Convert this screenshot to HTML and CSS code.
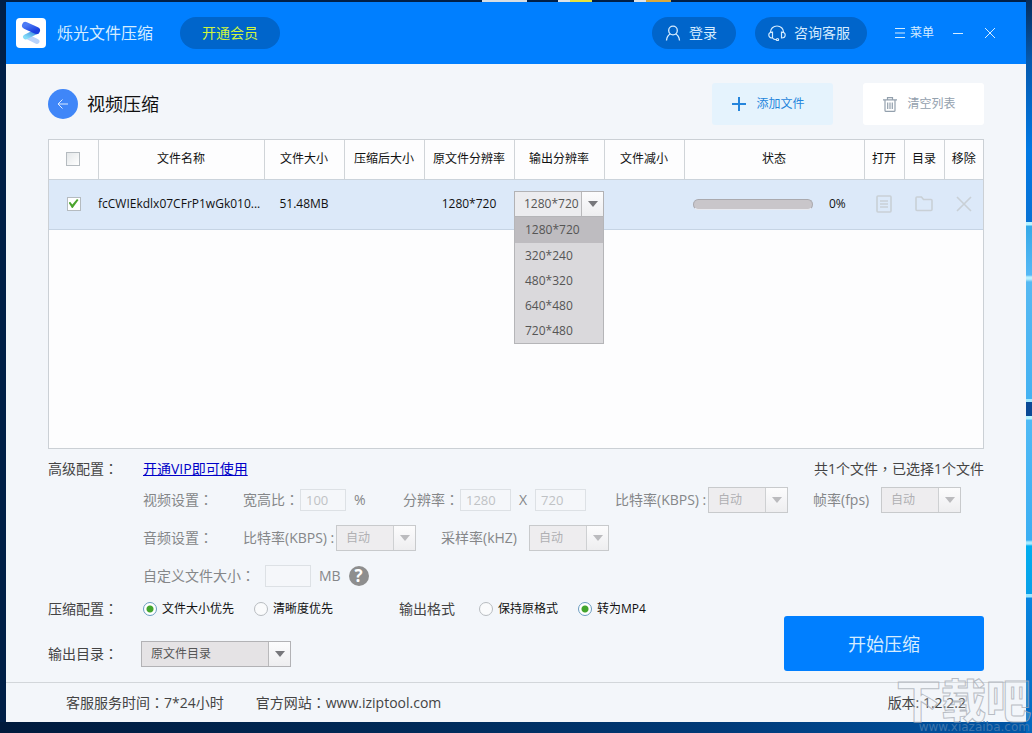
FILE: index.html
```
<!DOCTYPE html>
<html lang="zh-CN">
<head>
<meta charset="utf-8">
<title>烁光文件压缩</title>
<link rel="stylesheet" href="styles.css">
</head>
<body>
<div class="window">
  <header class="titlebar">
    <svg class="logo" viewBox="0 0 30 30" aria-hidden="true">
      <defs>
        <linearGradient id="lg1" x1="0" y1="0" x2="1" y2="1"><stop offset="0" stop-color="#4d7bf5"/><stop offset="1" stop-color="#1b40e0"/></linearGradient>
        <linearGradient id="lg2" x1="1" y1="0" x2="0" y2="1"><stop offset="0" stop-color="#3a86dc"/><stop offset="1" stop-color="#83dcf8"/></linearGradient>
      </defs>
      <rect width="30" height="30" rx="4" fill="#fff"/>
      <path d="M11 18.500L21 23.500" stroke="#b9d3fb" stroke-width="5" stroke-linecap="round"/>
      <path d="M20.500 13.500L9.500 19" stroke="url(#lg2)" stroke-width="5" stroke-linecap="round"/>
      <path d="M9.500 7.500L20.500 12.500" stroke="url(#lg1)" stroke-width="7" stroke-linecap="round"/>
    </svg>
    <h1 class="app-name">烁光文件压缩</h1>
    <button class="pill pill-vip" type="button">开通会员</button>
    <div class="title-actions">
      <button class="pill pill-login" type="button">
        <svg width="16" height="16" viewBox="0 0 16 16" fill="none" stroke="currentColor" stroke-width="1.300" aria-hidden="true"><circle cx="8" cy="5.500" r="4.300"/><path d="M1.500 15.500C1.800 12 3.500 9.800 5.500 9M14.500 15.500C14.200 12 12.500 9.800 10.500 9"/></svg>
        登录
      </button>
      <button class="pill pill-support" type="button">
        <svg width="18" height="16" viewBox="0 0 18 16" fill="none" stroke="currentColor" stroke-width="1.200" aria-hidden="true"><path d="M2.500 7.500V7C2.500 3.500 5.300 1 9 1S15.500 3.500 15.500 7V7.500"/><path d="M4.500 7.200V13C2.300 13 .8 12 .8 10.100S2.300 7.200 4.500 7.200ZM13.500 7.200V13C15.700 13 17.200 12 17.200 10.100S15.700 7.200 13.500 7.200ZM4.500 13C5.500 14.300 6.500 14.700 8 14.700"/><circle cx="9.500" cy="14.600" r="1.100"/></svg>
        咨询客服
      </button>
      <button class="plain menu" type="button">
        <svg width="10" height="10" viewBox="0 0 10 10" stroke="currentColor" aria-hidden="true"><path d="M0 .5H10M0 5H10M0 9.500H10"/></svg>
        菜单
      </button>
      <button class="plain" type="button" aria-label="最小化"><svg width="12" height="12" viewBox="0 0 12 12" stroke="currentColor"><path d="M1 6.500H11"/></svg></button>
      <button class="plain close" type="button" aria-label="关闭"><svg width="12" height="12" viewBox="0 0 12 12" stroke="currentColor"><path d="M1 1L11 11M11 1L1 11"/></svg></button>
    </div>
  </header>

  <main class="content">
    <div class="page-head">
      <button class="back" type="button" aria-label="返回"><svg width="12" height="12" viewBox="0 0 12 12" fill="none" stroke="currentColor"><path d="M11 6H1.500M5.500 1.500L1 6L5.500 10.500"/></svg></button>
      <h2 class="page-title">视频压缩</h2>
      <button class="tool add" type="button">
        <svg width="14" height="14" viewBox="0 0 14 14" stroke="currentColor" stroke-width="2" aria-hidden="true"><path d="M0 7H14M7 0V14"/></svg>
        添加文件
      </button>
      <button class="tool clear" type="button">
        <svg width="14" height="15" viewBox="0 0 14 15" fill="none" stroke="currentColor" stroke-width="1.200" aria-hidden="true"><path d="M0 2.800H14M4.500 2.500V.7H9.500V2.500M2 3V13.500Q2 14.400 3 14.400H11Q12 14.400 12 13.500V3M4.700 5.500V12M7 5.500V12M9.300 5.500V12"/></svg>
        清空列表
      </button>
    </div>

    <div class="file-panel">
      <table class="files">
        <colgroup>
          <col class="c-check"><col><col class="c-size"><col class="c-size"><col class="c-res"><col class="c-res"><col class="c-size"><col class="c-state"><col class="c-op"><col class="c-op"><col class="c-last">
        </colgroup>
        <thead>
          <tr>
            <th><input class="check" type="checkbox" aria-label="全选"></th>
            <th>文件名称</th><th>文件大小</th><th>压缩后大小</th><th>原文件分辨率</th><th>输出分辨率</th><th>文件减小</th><th>状态</th><th>打开</th><th>目录</th><th>移除</th>
          </tr>
        </thead>
        <tbody>
          <tr>
            <td><input class="check" type="checkbox" checked aria-label="选择文件"></td>
            <td class="name">fcCWIEkdlx07CFrP1wGk010...</td>
            <td>51.48MB</td>
            <td></td>
            <td>1280*720</td>
            <td>
              <div class="picker">
                <span class="combo combo-res"><select aria-label="输出分辨率"><option>1280*720</option><option>320*240</option><option>480*320</option><option>640*480</option><option>720*480</option></select></span>
                <ul class="options">
                  <li class="active">1280*720</li><li>320*240</li><li>480*320</li><li>640*480</li><li>720*480</li>
                </ul>
              </div>
            </td>
            <td></td>
            <td><div class="state"><div class="bar" role="progressbar" aria-label="进度" aria-valuenow="0"></div><span>0%</span></div></td>
            <td><button class="op" type="button" aria-label="打开"><svg width="16" height="18" viewBox="0 0 16 18" fill="none" stroke="currentColor" stroke-width="1.600"><rect x="1" y="1" width="14" height="16" rx="1"/><path d="M4 6H12M4 9H12M4 12H12"/></svg></button></td>
            <td><button class="op" type="button" aria-label="目录"><svg width="18" height="16" viewBox="0 0 18 16" fill="none" stroke="currentColor" stroke-width="1.600"><path d="M1 13.500V2Q1 1 2 1H6.500L8.500 3.500H16Q17 3.500 17 4.500V13.500Q17 14.500 16 14.500H2Q1 14.500 1 13.500Z"/></svg></button></td>
            <td><button class="op" type="button" aria-label="移除"><svg width="16" height="16" viewBox="0 0 16 16" fill="none" stroke="currentColor" stroke-width="1.600"><path d="M1 1L15 15M15 1L1 15"/></svg></button></td>
          </tr>
        </tbody>
      </table>
    </div>

    <div class="row row-first">
      <span class="label">高级配置<span class="mark" lang="zh-TW">：</span></span>
      <a class="vip-link" href="#">开通VIP即可使用</a>
      <span class="summary">共1个文件<span class="mark" lang="zh-TW">，</span>已选择1个文件</span>
    </div>
    <div class="row row-sub muted">
      <span class="sublabel">视频设置<span class="mark" lang="zh-TW">：</span></span>
      <div class="field f-ratio"><label class="l-short" for="ratio">宽高比<span class="mark" lang="zh-TW">：</span></label><input class="box" id="ratio" value="100" disabled><span class="unit">%</span></div>
      <div class="field f-size"><label class="l-short" for="rw">分辨率<span class="mark" lang="zh-TW">：</span></label><input class="box wide" id="rw" value="1280" disabled><span class="unit">X</span><input class="box wide" value="720" aria-label="高度" disabled></div>
      <div class="field f-rate"><label class="l-rate" for="vb">比特率(KBPS) :</label><span class="combo off"><select id="vb" disabled><option>自动</option></select></span></div>
      <div class="field"><label class="l-fps" for="fps">帧率(fps)</label><span class="combo off"><select id="fps" disabled><option>自动</option></select></span></div>
    </div>
    <div class="row row-sub muted gap-m">
      <span class="sublabel">音频设置<span class="mark" lang="zh-TW">：</span></span>
      <div class="field f-rate"><label class="l-rate" for="ab">比特率(KBPS) :</label><span class="combo off"><select id="ab" disabled><option>自动</option></select></span></div>
      <div class="field"><label class="l-sample" for="hz">采样率(kHZ)</label><span class="combo off"><select id="hz" disabled><option>自动</option></select></span></div>
    </div>
    <div class="row row-sub muted gap-m">
      <label class="l-custom" for="mb">自定义文件大小<span class="mark" lang="zh-TW">：</span></label>
      <input class="box" id="mb" disabled><span class="unit">MB</span>
      <button class="help" type="button" aria-label="帮助">?</button>
    </div>

    <div class="bottom">
      <div class="bottom-left">
        <div class="row">
          <span class="label">压缩配置<span class="mark" lang="zh-TW">：</span></span>
          <label class="choice"><input type="radio" name="mode" checked>文件大小优先</label>
          <label class="choice choice-last"><input type="radio" name="mode">清晰度优先</label>
          <span class="format">输出格式</span>
          <label class="choice"><input type="radio" name="format">保持原格式</label>
          <label class="choice"><input type="radio" name="format" checked>转为MP4</label>
        </div>
        <div class="row gap-l">
          <label class="label label-dir" for="dir">输出目录<span class="mark" lang="zh-TW">：</span></label>
          <span class="combo combo-dir"><select id="dir"><option>原文件目录</option></select></span>
        </div>
      </div>
      <button class="start" type="button">开始压缩</button>
    </div>
  </main>

  <footer class="statusbar">
    <span>客服服务时间<span class="mark" lang="zh-TW">：</span>7*24小时</span>
    <span>官方网站<span class="mark" lang="zh-TW">：</span>www.iziptool.com</span>
    <span class="version">版本: 1.2.2.2</span>
  </footer>
</div>
<div class="watermark" aria-hidden="true"><span class="wm-name">下载吧</span><span class="wm-url">www.xiazaiba.com</span></div>
</body>
</html>
```
FILE: styles.css
```
* { box-sizing: border-box; }

body {
  margin: 0;
  min-height: 100vh;
  display: flex;
  padding: 2px 6px 11px;
  position: relative;
  overflow: hidden;
  font: 14px/20px "Open Sans", "Noto Sans CJK SC", sans-serif;
  color: #444;
  background:
    linear-gradient(90deg, transparent 482px, #d8dde2 482px 527px, transparent 527px 558px, #dfe3e6 558px 570px, #e6e23c 570px 592px, transparent 592px 634px, #dfe3e6 634px 646px, #d9a83c 646px 671px, transparent 671px) top / 100% 2px no-repeat,
    linear-gradient(180deg, #062d5c 0, #0559ae 60px, #0079e4 150px, #0872d4 222px, #b8f4ff 222px 225px, #35aae8 226px, #55b8f5 275px, #b8f0ff 277px 279px, #55b9f2 282px, #44b2f2 399px, #a5eaff 399px 402px, #0a4a96 402px 416px, #b8f4ff 416px 419px, #4fbaf5 420px, #3aaef2 540px, #a5eaff 542px 544px, #00aeef 546px, #08a0e8 594px, #9be8ff 594px 597px, #0785e0 598px, #0067bd 100%) right / 6px 100% no-repeat,
    linear-gradient(90deg, #001a3c, #002a58 40%, #003a78 70%, #0057a8) bottom / 100% 11px no-repeat,
    #001f47;
}

h1, h2, ul { margin: 0; padding: 0; font-weight: 400; }
button, input, select { font: inherit; color: inherit; margin: 0; }
button { border: 0; padding: 0; background: none; display: flex; align-items: center; justify-content: center; }

/* Full-width punctuation centred in its cell */
.mark { font-family: "Noto Sans CJK TC", sans-serif; line-height: 1; }

.window {
  flex: 1;
  display: flex;
  flex-direction: column;
  background: #f3f6fa;
}

.titlebar {
  height: 62px;
  padding: 0 30px 0 10px;
  display: flex;
  align-items: center;
  background: #007fff;
  color: #d5ecff;
}
.logo { width: 30px; height: 30px; margin-right: 11px; }
.app-name { font-size: 16px; line-height: 24px; margin-right: 27px; }
.pill { height: 32px; border-radius: 16px; background: #0065cb; gap: 8px; }
.pill-vip { width: 100px; color: #d0f53c; }
.pill-login { width: 84px; margin-right: 19px; padding-right: 6px; }
.pill-support { width: 112px; margin-right: 28px; padding-right: 4px; }
.title-actions { display: flex; align-items: center; margin-left: auto; }
.plain { height: 24px; }
.menu { gap: 5px; margin-right: 18px; font-size: 12px; }
.close { margin-left: 20px; }

.content { flex: 1; padding: 0 42px; }

.page-head { display: flex; align-items: center; height: 75px; padding-top: 5px; }
.back { width: 30px; height: 30px; border-radius: 50%; background: #3f86f8; color: #dcebff; }
.page-title { margin-left: 9px; font-size: 18px; line-height: 24px; color: #111; }
.tool { width: 121px; height: 42px; padding-right: 8px; border-radius: 3px; font-size: 12px; gap: 10px; }
.add { margin-left: auto; margin-right: 30px; background: #e5f3fd; color: #2585dc; }
.clear { background: #fff; color: #93a0ad; }

.file-panel { height: 310px; border: 1px solid #cbd0d5; background: #fdfdfe; }
.files { width: 100%; table-layout: fixed; border-collapse: collapse; font-size: 12px; color: #111; }
.c-check { width: 49px; }
.c-size { width: 80px; }
.c-res { width: 90px; }
.c-state { width: 180px; }
.c-op { width: 40px; }
.c-last { width: 39px; }
.files th, .files td { padding: 0; text-align: center; font-weight: 400; white-space: nowrap; }
.files th { height: 39px; border-right: 1px solid #d0d4d8; border-bottom: 1px solid #cbd3db; }
.files th:last-child { border-right: 0; }
.files td { height: 50px; background: #dce9f9; border-bottom: 1px solid #c6d4e4; }
.files .name { text-align: left; }

.check {
  appearance: none;
  display: block;
  width: 14px;
  height: 14px;
  margin: 0 auto;
  border: 1px solid #b5bbc0;
  background: linear-gradient(135deg, #e4e7e9, #fff);
}
.check:checked { background: #fff; }
.check:checked::after {
  content: "";
  display: block;
  width: 10px;
  height: 9px;
  margin: 1px;
  background: #4ba52e;
  clip-path: polygon(0 40%, 18% 32%, 38% 60%, 85% 0, 100% 12%, 42% 100%, 34% 100%);
}

.combo { position: relative; display: inline-flex; width: 80px; height: 26px; border: 1px solid #b2b2b5; background: #e5e3e5; }
.combo select { appearance: none; width: 100%; border: 0; padding: 0 22px 0 9px; background: none; font-size: 12px; color: #555; opacity: 1; border-radius: 0; }
.combo::before { content: ""; position: absolute; top: 0; right: 0; bottom: 0; width: 21px; border-left: 1px solid #b9b9bb; background: linear-gradient(#fcfcfd, #eeeef0); }
.combo::after { content: ""; position: absolute; top: 9px; right: 5px; border: 5px solid transparent; border-top: 6px solid #77777b; border-bottom: 0; }
.combo.off { border-color: #c8cacc; background: #eeedef; }
.combo.off select { color: #b0b0b3; }
.combo.off::before { border-color: #ced0d2; }
.combo.off::after { border-top-color: #bbbbbe; }
.combo-res { width: 90px; background: #ececef; }
.combo-res select { padding-right: 20px; }
.combo-dir { width: 150px; }

.picker { position: relative; width: 90px; height: 26px; }
.options {
  position: absolute;
  z-index: 2;
  top: 25px;
  left: 0;
  width: 100%;
  list-style: none;
  text-align: left;
  border: 1px solid #b5b5b8;
  background: #dad9dc;
  color: #555;
}
.options li { height: 25px; padding-left: 10px; line-height: 26px; }
.options .active { height: 26px; background: #bebcc0; }

.state { display: flex; align-items: center; padding-left: 9px; gap: 16px; }
.bar { width: 120px; height: 11px; border-radius: 6px; background: #c9c6ca; border: 1px solid #aaa9ae; border-bottom-color: #e8eaf0; }
.op { width: 100%; color: #c9d0d6; }

.row { display: flex; align-items: center; height: 26px; white-space: nowrap; }
.row-first { margin: 7px 0 5px; }
.row-sub { padding-left: 95px; }
.gap-m { margin-top: 12px; }
.gap-l { margin-top: 19px; }
.label { width: 95px; flex: none; }
.label-dir { width: 93px; }
.vip-link { color: #0000c8; }
.summary { margin-left: auto; }
.muted { color: #858789; }
.sublabel { width: 100px; flex: none; }
.field { display: flex; align-items: center; flex: none; }
.f-ratio { width: 160px; }
.f-size { width: 212px; }
.f-rate { width: 198px; }
.l-short { width: 57px; }
.l-rate { width: 93px; }
.l-fps { width: 68px; }
.l-sample { width: 88px; }
.l-custom { width: 122px; }
.box { width: 46px; height: 22px; padding: 0 5px; border: 1px solid #dde1e5; background: #f5f7fa; color: #bfc2c5; font-size: 13px; }
.box.wide { width: 51px; }
.unit { margin: 0 8px; }
.help { width: 20px; height: 20px; border-radius: 50%; background: #8e8e8e; color: #fff; font-weight: 700; font-size: 17px; line-height: 20px; }

.bottom { display: flex; justify-content: space-between; align-items: flex-end; margin-top: 7px; padding-bottom: 11px; }
.bottom-left { padding-bottom: 4px; }
.choice { display: flex; align-items: center; gap: 5px; margin-right: 20px; font-size: 12px; color: #111; }
.choice-last { margin-right: 66px; }
.choice input { appearance: none; width: 14px; height: 14px; border: 1px solid #b8bcc0; border-radius: 50%; background: #fafbfc; }
.choice input:checked { border-color: #6a9cc0; background: radial-gradient(circle, #43a52c 0 3px, #fff 4px); }
.format { margin-right: 24px; }
.start { width: 200px; height: 55px; border-radius: 3px; background: #007fff; color: #d5ecff; font-size: 18px; }

.statusbar { display: flex; align-items: center; gap: 32px; height: 40px; padding: 0 60px; border-top: 1px solid #d2d6da; }
.version { margin-left: auto; }

.watermark { position: absolute; right: 2px; bottom: 0; width: 134px; height: 58px; pointer-events: none; }
.wm-name { display: block; font: 900 45px/48px "Noto Sans CJK SC", sans-serif; color: rgba(240, 243, 247, 0.2); -webkit-text-stroke: 1px rgba(165, 170, 178, 0.75); white-space: nowrap; }
.wm-url { position: absolute; right: 0; bottom: 0; font: 12px/12px "DejaVu Sans", sans-serif; color: #3f76ad; }
```
